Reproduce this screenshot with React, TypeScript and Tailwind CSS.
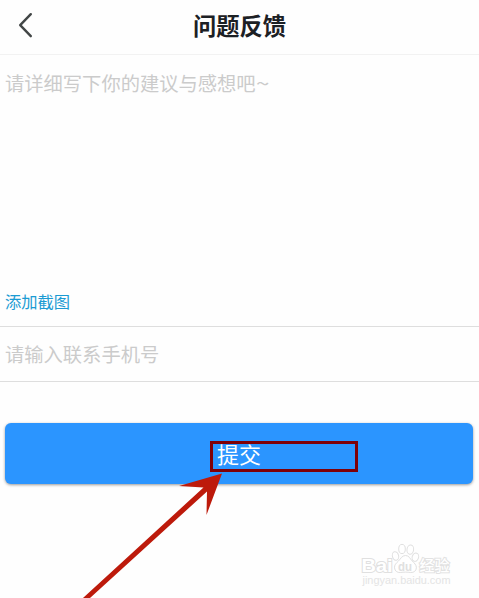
function Watermark() {
  return (
    <svg
      className="absolute left-[358px] top-[540px] font-['Liberation_Sans','Noto_Sans_CJK_SC',sans-serif]"
      width="100"
      height="50"
      viewBox="358 540 100 50"
      fill="#fff"
      stroke="#e0e0e0"
      strokeWidth="1"
    >
      <text x="361.5" y="571.5" fontSize="19" fontWeight="700" strokeWidth="2" paintOrder="stroke" textLength="31" lengthAdjust="spacingAndGlyphs">Bai</text>
      <ellipse cx="395.5" cy="556" rx="3.1" ry="4.3" transform="rotate(-15 395.5 556)" />
      <ellipse cx="402" cy="549" rx="3.3" ry="4.6" />
      <ellipse cx="410.3" cy="549.6" rx="3.3" ry="4.6" transform="rotate(8 410.3 549.6)" />
      <ellipse cx="415.4" cy="557.2" rx="3.2" ry="4.2" transform="rotate(18 415.4 557.2)" />
      <path d="M405.5 555.5c-3.5 0-4.8 3.3-7 5.500-2.400 2.200-4.200 4-4 6.800.3 3.300 2.800 5 5.800 4.700 3.600-.5 6.900-.5 10.400 0 3.200.3 5.500-1.700 5.700-4.700.1-3-2.300-4.800-4.400-7-2-2.200-3-5.300-6.500-5.300z" />
      <text x="398" y="570.500" fontSize="13" fontWeight="700" fill="#e0e0e0" stroke="none" textLength="14" lengthAdjust="spacingAndGlyphs">du</text>
      <text x="419.500" y="571" fontSize="15" fontWeight="500" strokeWidth="2" stroke="#e2e2e2" paintOrder="stroke" textLength="30">经验</text>
      <text x="362.500" y="584" fontSize="10" stroke="none" fill="#e4e4e4" textLength="88" lengthAdjust="spacingAndGlyphs">jingyan.baidu.com</text>
    </svg>
  );
}

export default function App() {
  return (
    <main className="relative flex h-[598px] w-[479px] flex-col overflow-hidden bg-[#fefefe] font-['Noto_Sans_CJK_SC',sans-serif]">
      <header className="grid h-[55px] shrink-0 grid-cols-[1fr_auto_1fr] items-center border-b border-[#f2f2f2]">
        <button aria-label="返回" className="ml-[18px] w-4">
          <svg className="-mt-1" width="16" height="28" viewBox="0 0 16 28" fill="none" stroke="#424646" strokeWidth="2.400" strokeLinecap="round" strokeLinejoin="round">
            <path d="M12.800 3.200 2.200 14.200 12.800 25.200" />
          </svg>
        </button>
        <h1 className="-mt-1 text-[23.300px] font-bold leading-8 text-[#1c2024]">问题反馈</h1>
      </header>
      <section className="flex h-[272px] shrink-0 flex-col justify-between border-b border-[#dedede] px-[5px] pb-[13px] pt-[14px]">
        <p className="text-[19.300px] leading-7 text-[#cbcbcb]">请详细写下你的建议与感想吧<span className="inline-block origin-left scale-x-125">~</span></p>
        <button className="self-start text-[16.300px] leading-6 text-[#1b9bd3]">添加截图</button>
      </section>
      <section className="flex h-[55px] shrink-0 items-center border-b border-[#dedede] px-[5px]">
        <p className="text-[19.300px] leading-7 text-[#cbcbcb]">请输入联系手机号</p>
      </section>
      <button className="ml-[5px] mt-[41px] h-[61px] w-[468px] shrink-0 rounded-md bg-[#2b95ff] pb-[2px] text-[22px] leading-8 text-white shadow-[0_1px_3px_rgba(0,0,0,0.4)]">
        提交
      </button>
      <div className="absolute left-[210px] top-[441px] h-[31px] w-[148px] border-3 border-[#7f0008]" />
      <svg className="absolute left-0 top-0" width="479" height="598" viewBox="0 0 479 598" fill="#bd1a0b">
        <path d="M222 473.500 179 486 203.500 487.500 83 598H90L207 491.500 206.500 515Z" />
      </svg>
      <Watermark />
    </main>
  );
}
